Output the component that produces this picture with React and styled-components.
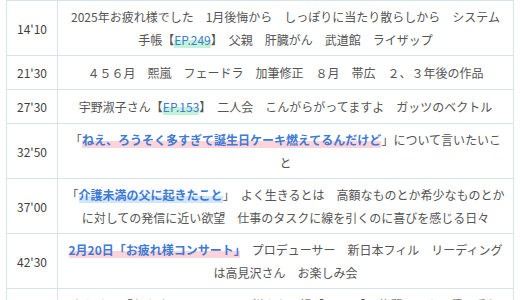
import React from "react";
import styled, { createGlobalStyle } from "styled-components";

const Global = createGlobalStyle`
  html, body { margin: 0; padding: 0; background: #fff; }
  body { font-family: "Noto Sans CJK JP", "Noto Sans", sans-serif; overflow: hidden; }
`;

const Wrap = styled.div`
  padding: 0 6px;
`;

const Table = styled.table`
  width: 508px;
  border-collapse: collapse;
  table-layout: fixed;
  font-size: 12px;
  line-height: 23px;
`;

const TimeCell = styled.td`
  width: 50px;
  border: 1px solid #d5e5ee;
  text-align: center;
  vertical-align: middle;
  color: #3f3f3f;
  padding: 5px 0;
`;

const TextCell = styled.td`
  border: 1px solid #d5e5ee;
  text-align: center;
  color: #555;
  padding: 4px 7px;
  word-break: break-all;
`;

const Word = styled.span`
  white-space: nowrap;
`;

const markers = {
  green: "linear-gradient(transparent 55%, #c4f2d6 55%)",
  pink: "linear-gradient(transparent 60%, #ffd3da 60%)",
  blue: "linear-gradient(transparent 60%, #d2e6fb 60%)",
};

const Link = styled.a`
  color: #3d7bd6;
  text-decoration: none;
  font-weight: ${(p) => (p.$bold ? 700 : 400)};
  background: ${(p) => markers[p.$marker]};
`;

const rows = [
  {
    t: "14'10",
    c: (
      <>
        2025年お疲れ様でした　1月後悔から　しっぽりに当たり散らしから　システム<Word>手帳</Word>【
        <Link $marker="green">EP.249</Link>】　父親　肝臓がん　武道館　ライザップ
      </>
    ),
  },
  { t: "21'30", c: "４５６月　熙嵐　フェードラ　加筆修正　８月　帯広　２、３年後の作品" },
  {
    t: "27'30",
    c: (
      <>
        宇野淑子さん【<Link $marker="green">EP.153</Link>】　二人会　こんがらがってますよ　ガッツのベクトル
      </>
    ),
  },
  {
    t: "32'50",
    c: (
      <>
        「<Link $bold $marker="pink">ねえ、ろうそく多すぎて誕生日ケーキ燃えてるんだけど</Link>」について言いたいこと
      </>
    ),
  },
  {
    t: "37'00",
    c: (
      <>
        「<Link $bold $marker="blue">介護未満の父に起きたこと</Link>」　よく生きるとは　高額なものとか希少なものとかに対しての発信に近い欲望　仕事のタスクに線を引くのに喜びを感じる日々
      </>
    ),
  },
  {
    t: "42'30",
    c: (
      <>
        <Link $bold $marker="pink">2月20日「お疲れ様コンサート」</Link>　プロデューサー　新日本フィル　リーディングは高見沢さん　お楽しみ会
      </>
    ),
  },
  {
    t: "48'10",
    c: "おしまい「おやすみ」について　様々な習慣【EP.120】　後輩　日々の積み重ね　運動会　健康診断の話",
  },
];

export default function App() {
  return (
    <>
      <Global />
      <Wrap>
        <Table>
          <tbody>
            {rows.map((r) => (
              <tr key={r.t}>
                <TimeCell>{r.t}</TimeCell>
                <TextCell>{r.c}</TextCell>
              </tr>
            ))}
          </tbody>
        </Table>
      </Wrap>
    </>
  );
}
